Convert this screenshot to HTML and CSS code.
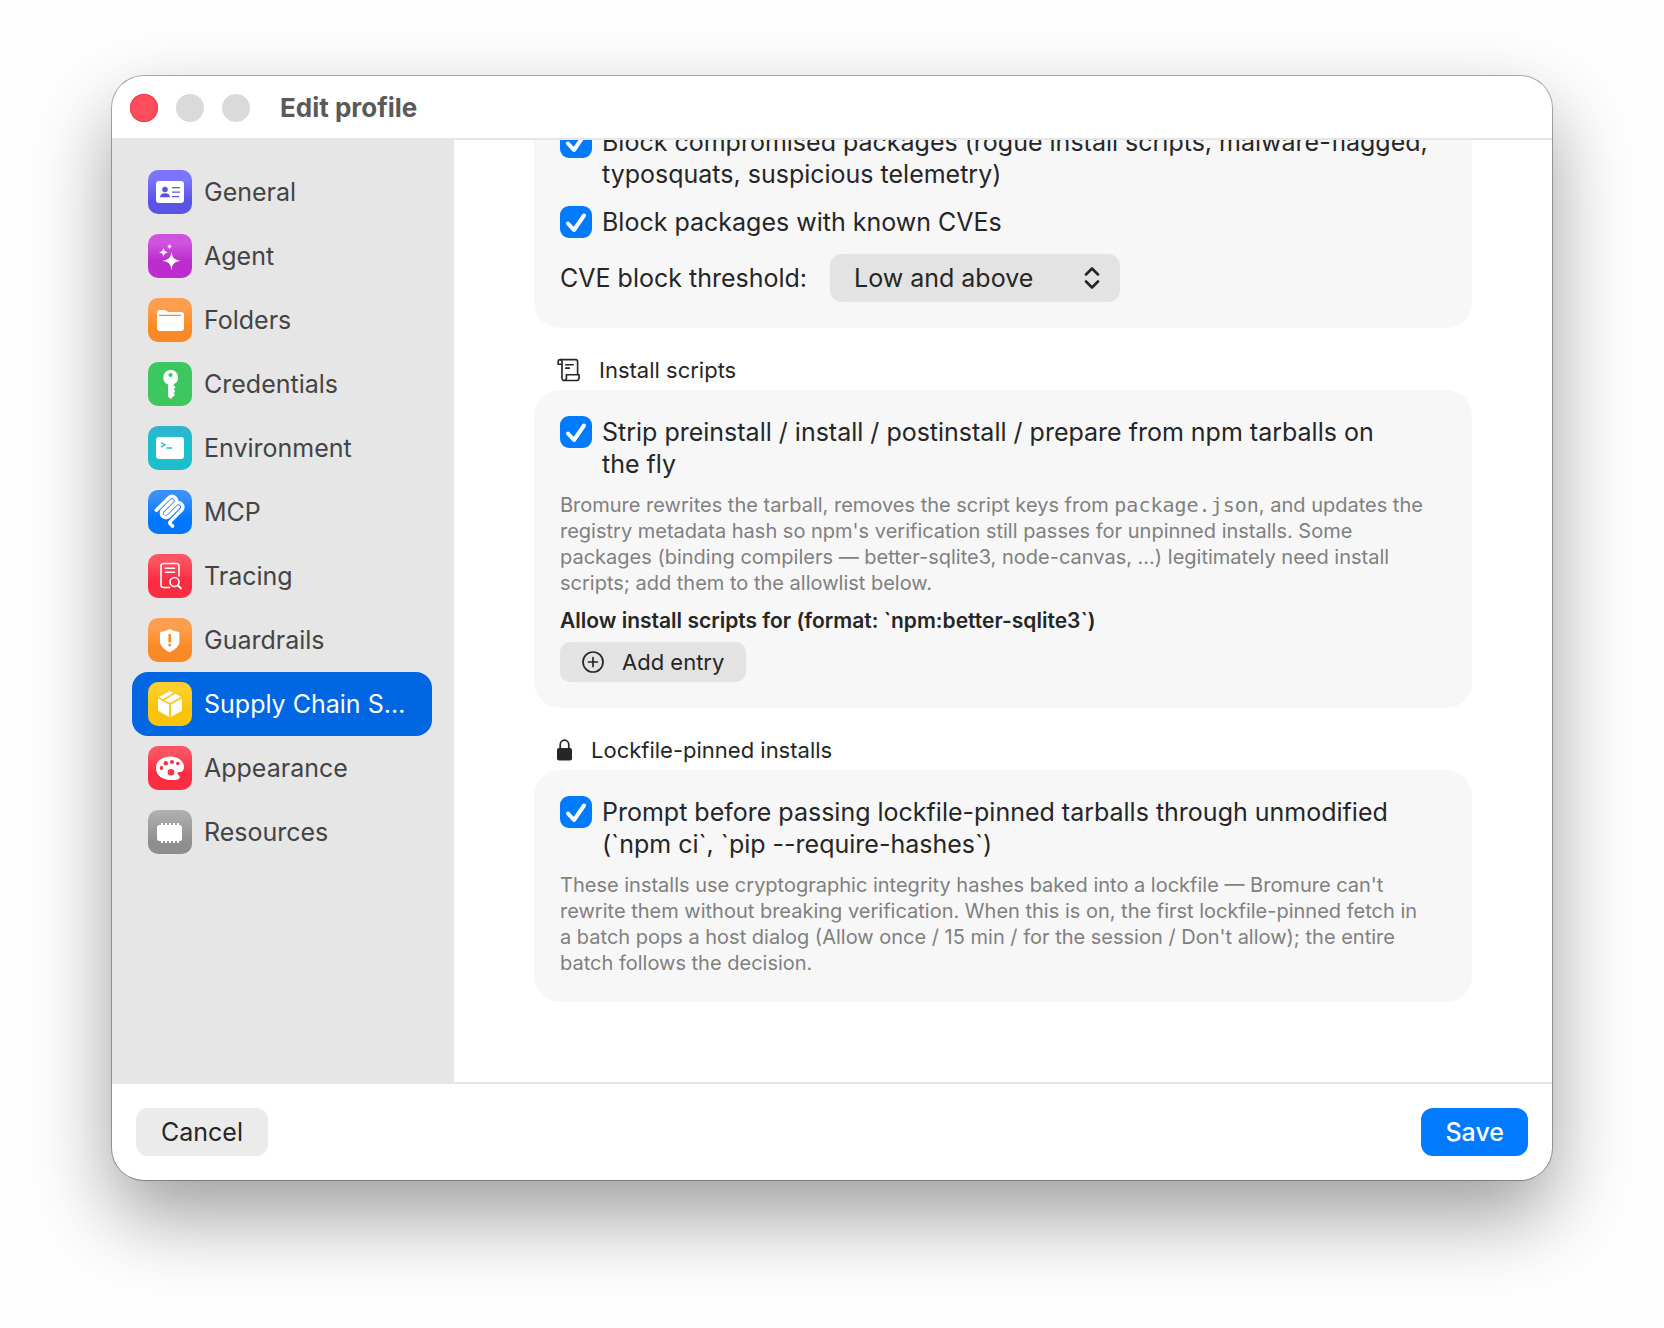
FILE: index.html
```html
<!DOCTYPE html>
<html lang="en">
<head>
<meta charset="utf-8">
<title>Edit profile</title>
<link rel="stylesheet" href="styles.css">
</head>
<body>
<div class="window">
  <header class="titlebar">
    <div class="lights">
      <button class="light light-close" aria-label="Close"></button>
      <button class="light" aria-label="Minimize"></button>
      <button class="light" aria-label="Zoom"></button>
    </div>
    <h1 class="title">Edit profile</h1>
  </header>

  <div class="body">
    <nav class="sidebar">
      <a class="item" href="#general">
        <svg class="tile indigo" viewBox="0 0 44 44"><rect x="8" y="11" width="28" height="22" rx="3" fill="#fff"/><g fill="#5b52e6"><circle cx="17" cy="19.5" r="2.8"/><path d="M12 27.2c0-2.600 2.400-4 5-4s5 1.400 5 4z"/><path d="M24 17h8v1.200h-8zM24 21.500h8v1.200h-8zM24 26h7v1.200h-7z"/></g></svg>
        <span>General</span></a>
      <a class="item" href="#agent">
        <svg class="tile purple" viewBox="0 0 44 44"><g fill="#fff"><path d="M23.500 18c.9 5.600 2.600 7.800 9.200 8.800-6.600 1-8.300 3.200-9.200 9.200-.9-6-2.600-8.200-9.200-9.200 6.600-1 8.300-3.200 9.200-8.800z"/><path d="M15.500 13.500c.5 3 1.500 4.100 4.700 4.700-3.200.6-4.200 1.700-4.700 4.700-.5-3-1.500-4.100-4.700-4.700 3.200-.6 4.200-1.700 4.700-4.700z"/><path d="M21.500 9.500c.4 2 1 2.600 2.900 3-1.900.4-2.500 1-2.900 3-.4-2-1-2.600-2.900-3 1.900-.4 2.500-1 2.900-3z"/></g></svg>
        <span>Agent</span></a>
      <a class="item" href="#folders">
        <svg class="tile orange" viewBox="0 0 44 44"><path d="M9 15c0-2 1-3 3-3h4c1.500 0 2 .4 3 1.200.7.500 1.200.8 2 .8h12c2 0 3 1 3 3v13c0 2-1 3-3 3H12c-2 0-3-1-3-3z" fill="#fff"/><path d="M11 17.300h22" stroke="#fa8c2e" stroke-width="1.200"/></svg>
        <span>Folders</span></a>
      <a class="item" href="#credentials">
        <svg class="tile green" viewBox="0 0 44 44"><path d="M22.500 8a7.500 7.500 0 0 1 3.200 14.300v1.200l1.800 1.800-1.800 2.200 1.600 1.900-1.600 1.700 1.200 2-4.400 4-2.500-2.500V22.600A7.600 7.600 0 0 1 22.500 8z" fill="#fff"/><circle cx="22.500" cy="13" r="2" fill="#3cc85f"/></svg>
        <span>Credentials</span></a>
      <a class="item" href="#environment">
        <svg class="tile teal" viewBox="0 0 44 44"><rect x="8" y="11" width="28" height="22" rx="3" fill="#fff"/><path d="M13 16.500l4 2.300-4 2.300M18.500 22h5.500" fill="none" stroke="#1bbfcb" stroke-width="1.300"/></svg>
        <span>Environment</span></a>
      <a class="item" href="#mcp">
        <svg class="tile blue" viewBox="0 0 44 44"><g transform="translate(5 4.500) scale(.185)" fill="none" stroke="#fff" stroke-width="19" stroke-linecap="round"><path d="M18 84.850 85.880 16.970c9.370-9.370 24.570-9.370 33.940 0s9.370 24.570 0 33.940L68.560 102.180"/><path d="M69.270 101.470l50.550-50.560c9.380-9.370 24.570-9.370 33.950 0l.35.350c9.370 9.380 9.370 24.570 0 33.950L92.720 146.600c-3.120 3.120-3.120 8.190 0 11.310l12.610 12.610"/><path d="M102.850 33.940 52.650 84.150c-9.370 9.370-9.370 24.560 0 33.940s24.570 9.370 33.940 0l50.200-50.210"/></g></svg>
        <span>MCP</span></a>
      <a class="item" href="#tracing">
        <svg class="tile red" viewBox="0 0 44 44"><g fill="none" stroke="#fff" stroke-width="1.600" stroke-linecap="round"><path d="M21.500 33.500H15.500a2.500 2.500 0 0 1-2.500-2.500V12a2.500 2.500 0 0 1 2.500-2.500H28.500A2.500 2.500 0 0 1 31 12V22"/><path d="M17.500 14.200h9M17.500 18.200h9"/><circle cx="26.500" cy="28" r="4.500"/><path d="M29.900 31.400l3 3" stroke-width="2"/></g></svg>
        <span>Tracing</span></a>
      <a class="item" href="#guardrails">
        <svg class="tile orange" viewBox="0 0 44 44"><path d="M21.700 11c2.500 1.500 5.500 2.500 8.500 2.800.8.100 1.200.6 1.200 1.400v8.300c0 4.500-4 8-9.700 10.700C16 31.500 12 28 12 23.500v-8.300c0-.8.400-1.300 1.200-1.400 3-.3 6-1.300 8.500-2.800z" fill="#fff"/><path d="M21.700 17v6.500" stroke="#fa8c2e" stroke-width="2.600" stroke-linecap="round"/><circle cx="21.700" cy="27" r="1.500" fill="#fa8c2e"/></svg>
        <span>Guardrails</span></a>
      <a class="item selected" href="#supply-chain" aria-current="page">
        <svg class="tile yellow" viewBox="0 0 44 44"><g fill="#fff"><path d="M17.300 11.500 20.700 9.800c.9-.4 1.700-.4 2.600 0l2 1L14.800 17.200 10.900 15z"/><path d="M27.200 11.700 33.200 14.800 22 20.900 16.600 18.200z"/><path d="M10 16.600 21.200 22.600V34.900L11.300 29.600c-.9-.5-1.300-1.100-1.300-2zM34 16.600 22.900 22.600V34.900L32.700 29.600c.9-.5 1.300-1.100 1.300-2z"/></g></svg>
        <span>Supply Chain S…</span></a>
      <a class="item" href="#appearance">
        <svg class="tile red" viewBox="0 0 44 44"><path d="M22 10.500C30 10.500 36 15 36 21c0 3.200-1.600 5-4 5-1.500 0-2.600.5-2.600 1.500 0 1 2.400 2 2.400 3.800 0 2.200-3.500 2.800-7.300 2.800C14.500 34.100 8 29.500 8 22.200 8 15 14.500 10.500 22 10.500z" fill="#fff"/><g fill="#fb2f45"><circle cx="13.500" cy="22" r="1.900"/><circle cx="17.800" cy="17.200" r="2.200"/><circle cx="24" cy="16" r="2"/><circle cx="29.800" cy="17.500" r="1.800"/><circle cx="23" cy="26.300" r="3.300"/></g></svg>
        <span>Appearance</span></a>
      <a class="item" href="#resources">
        <svg class="tile gray" viewBox="0 0 44 44"><rect x="9" y="15" width="25" height="16" rx="2.500" fill="#fff"/><path d="M14 13v20M18 13v20M22 13v20M26 13v20M30 13v20" stroke="#fff" stroke-width="2"/></svg>
        <span>Resources</span></a>
    </nav>

    <main class="content">
      <section class="card">
        <label class="check"><input type="checkbox" checked><span>Block compromised packages (rogue install scripts, malware-flagged,<br>typosquats, suspicious telemetry)</span></label>
        <label class="check"><input type="checkbox" checked><span>Block packages with known CVEs</span></label>
        <div class="field">
          <label for="threshold">CVE block threshold:</label>
          <div class="popup">
            <select id="threshold"><option>Low and above</option></select>
            <svg class="chevrons" viewBox="0 0 16 24"><path d="M2 8.500 8 2.500l6 6M2 15.500l6 6 6-6" fill="none" stroke="#262626" stroke-width="2.600" stroke-linejoin="round" stroke-linecap="round"/></svg>
          </div>
        </div>
      </section>

      <h2 class="heading"><svg class="scroll-icon" viewBox="0 0 24 24"><g fill="none" stroke="#262626" stroke-width="1.700" stroke-linejoin="round"><path d="M5 6H1.200V3.500a2.300 2.300 0 0 1 2.300-2.300h16a2 2 0 0 1 2 2V16.500"/><path d="M3.200 1.200A2 2 0 0 1 5.200 3.200V20.500A2.400 2.400 0 0 0 7.600 23"/><path d="M7.600 23a2.400 2.400 0 0 0 2.200-2.400V17H23v3.500A2.400 2.400 0 0 1 20.600 23z"/><path d="M8.500 6.500h9M8.500 10h5"/></g></svg>Install scripts</h2>
      <section class="card">
        <label class="check"><input type="checkbox" checked><span>Strip preinstall / install / postinstall / prepare from npm tarballs on<br>the fly</span></label>
        <p class="note">Bromure rewrites the tarball, removes the script keys from <code>package.json</code>, and updates the<br>registry metadata hash so npm's verification still passes for unpinned installs. Some<br>packages (binding compilers — better-sqlite3, node-canvas, …) legitimately need install<br>scripts; add them to the allowlist below.</p>
        <div class="allow">
          <h3 class="subhead">Allow install scripts for (format: `npm:better-sqlite3`)</h3>
          <button class="button add"><svg class="plus-icon" viewBox="0 0 22 22"><g fill="none" stroke="#262626" stroke-width="1.700" stroke-linecap="round"><circle cx="11" cy="11" r="10"/><path d="M11 6.500v9M6.500 11h9"/></g></svg>Add entry</button>
        </div>
      </section>

      <h2 class="heading"><svg class="lock-icon" viewBox="0 0 15 22"><rect y="9" width="15" height="12.500" rx="2" fill="#262626"/><path d="M3.200 10V6a4.300 4.800 0 0 1 8.600 0v4" fill="none" stroke="#262626" stroke-width="1.700"/></svg>Lockfile-pinned installs</h2>
      <section class="card">
        <label class="check"><input type="checkbox" checked><span>Prompt before passing lockfile-pinned tarballs through unmodified<br>(`npm ci`, `pip --require-hashes`)</span></label>
        <p class="note">These installs use cryptographic integrity hashes baked into a lockfile — Bromure can't<br>rewrite them without breaking verification. When this is on, the first lockfile-pinned fetch in<br>a batch pops a host dialog (Allow once / 15 min / for the session / Don't allow); the entire<br>batch follows the decision.</p>
      </section>
    </main>
  </div>

  <footer class="footer">
    <button class="button cancel">Cancel</button>
    <button class="button save">Save</button>
  </footer>
</div>
</body>
</html>
```
FILE: styles.css
```css
* { box-sizing: border-box; }

body {
  margin: 0;
  height: 100vh;
  padding: 76px 112px 148px;
  background: #fefefe;
  color: #262626;
  font: 25px/32px Inter, "Liberation Sans", sans-serif;
}

h1, h2, h3, p { margin: 0; }
button, select { font: inherit; color: inherit; border: 0; }

.window {
  display: flex;
  flex-direction: column;
  height: 100%;
  background: #fff;
  border-radius: 32px;
  overflow: hidden;
  box-shadow: 0 0 0 1px rgba(0, 0, 0, .3), 0 36px 80px rgba(0, 0, 0, .38);
}

.titlebar {
  flex: none;
  display: flex;
  align-items: center;
  gap: 30px;
  height: 64px;
  padding: 2px 18px 0;
  border-bottom: 2px solid #e6e6e6;
}
.lights { display: flex; gap: 18px; }
.light {
  width: 28px;
  height: 28px;
  padding: 0;
  border-radius: 50%;
  background: #dadada;
}
.light-close { background: #ff4d5b; box-shadow: inset 0 0 0 1px #f03a4a; }
.title { font-size: 26px; font-weight: 700; color: #5a5a5a; }

.body { flex: 1; min-height: 0; display: flex; }

.sidebar {
  flex: none;
  width: 342px;
  padding: 20px 22px 20px 20px;
  background: #e6e6e6;
}
.item {
  display: flex;
  align-items: center;
  gap: 12px;
  height: 64px;
  padding: 0 16px;
  border-radius: 16px;
  color: #444;
  text-decoration: none;
  white-space: nowrap;
}
.selected { background: #0066e2; color: #fff; }
.tile { flex: none; width: 44px; height: 44px; border-radius: 10px; }
.indigo { background: linear-gradient(#7c74fb 20%, #5b52e6 70%); }
.purple { background: linear-gradient(#d053e0 20%, #bb2dcd 60%); }
.orange { background: linear-gradient(#ff9f4d 20%, #fa8a28 65%); }
.green { background: #3cc85f; }
.teal { background: linear-gradient(#36b0d0, #1bbfcb 30%); }
.blue { background: linear-gradient(#3a90fb 15%, #0077fb 65%); }
.red { background: linear-gradient(#ff5362 15%, #fb2d43 60%); }
.yellow { background: linear-gradient(#fccf2c 15%, #f9c40a 60%); }
.gray { background: linear-gradient(#b0b1b0, #8d8f8e 75%); }

.content {
  flex: 1;
  min-width: 0;
  display: flex;
  flex-direction: column;
  justify-content: flex-end;
  padding: 0 80px 80px;
  overflow: hidden;
}
.card {
  flex: none;
  display: flex;
  flex-direction: column;
  gap: 12px;
  padding: 26px;
  border-radius: 26px;
  background: #f7f7f7;
}
.card:first-child { gap: 16px; }

.check { display: flex; gap: 10px; white-space: nowrap; }
.check input {
  flex: none;
  appearance: none;
  width: 32px;
  height: 32px;
  margin: 0;
  border-radius: 9px;
  background: #007aff url("data:image/svg+xml,%3Csvg xmlns='http://www.w3.org/2000/svg' viewBox='0 0 32 32'%3E%3Cpath d='M8 17.500l6 6.500L24 9.500' fill='none' stroke='white' stroke-width='4' stroke-linecap='round' stroke-linejoin='round'/%3E%3C/svg%3E");
}

.field { display: flex; align-items: center; gap: 18px; }
.field label { min-width: 252px; }
.popup { display: grid; align-items: center; width: 290px; }
.popup > * { grid-area: 1 / 1; }
.popup select {
  appearance: none;
  height: 48px;
  padding: 0 48px 0 24px;
  border-radius: 12px;
  background: #e3e3e3;
}
.chevrons { justify-self: end; width: 16px; height: 24px; margin-right: 20px; pointer-events: none; }

.heading {
  flex: none;
  display: flex;
  align-items: center;
  gap: 19px;
  height: 28px;
  margin: 28px 0 6px;
  padding-left: 23px;
  font-size: 22px;
  font-weight: 400;
}
.scroll-icon { width: 23px; height: 24px; }
.lock-icon { width: 15px; height: 22px; }

.note { font-size: 20px; line-height: 26px; color: #808080; white-space: nowrap; }
.note code { font-family: "DejaVu Sans Mono", monospace; font-size: 20px; line-height: 20px; }
.allow { display: flex; flex-direction: column; align-items: flex-start; gap: 8px; }
.subhead { font-size: 21px; line-height: 26px; font-weight: 600; }

.button {
  display: flex;
  align-items: center;
  justify-content: center;
  height: 48px;
  padding: 0 24px;
  border-radius: 12px;
}
.add { gap: 18px; height: 40px; padding: 0 22px; border-radius: 10px; background: #e3e3e3; font-size: 22px; }
.plus-icon { width: 22px; height: 22px; }

.footer {
  flex: none;
  display: flex;
  justify-content: space-between;
  padding: 24px;
  border-top: 2px solid #e6e6e6;
}
.cancel { min-width: 132px; background: #ebebeb; }
.save { background: #007aff; color: #fff; font-weight: 500; }
```
